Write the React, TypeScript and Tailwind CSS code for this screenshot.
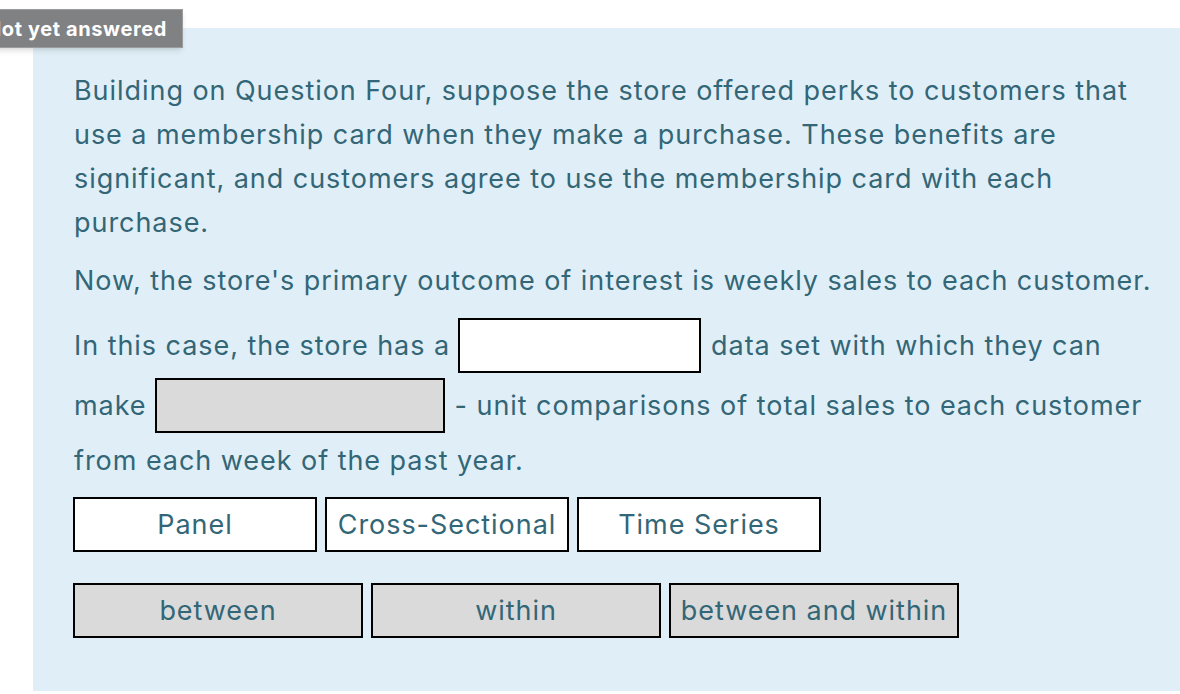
const font = { fontFamily: "Inter, 'Open Sans', sans-serif" };

function Blank({ filled }: { filled?: boolean }) {
  return (
    <span
      className={
        "inline-block h-[55px] border-2 border-black " +
        (filled ? "w-[290px] bg-[#dadada]" : "w-[243px] bg-white")
      }
    />
  );
}

function Choice({ label, gray }: { label: string; gray?: boolean }) {
  return (
    <div
      className={
        "flex h-[55px] items-center justify-center border-2 border-black whitespace-nowrap " +
        (gray ? "w-[290px] bg-[#dadada]" : "w-[244px] bg-white")
      }
    >
      {label}
    </div>
  );
}

export default function App() {
  return (
    <div className="relative h-[694px] w-[1180px] overflow-hidden bg-white" style={font}>
      <div className="absolute top-[9px] left-[-30px] z-10 flex h-[39px] items-center border border-[#9c9c9c] bg-[#7f8183] px-[15px] text-[20px] font-bold tracking-[0.6px] text-white shadow-md">
        Not yet answered
      </div>

      <div className="ml-[33px] mt-[28px] h-[663px] bg-[#e0eff7] pl-[41px] pt-[41px] text-[27px] leading-[44px] tracking-[0.95px] text-[#336676]">
        <p className="whitespace-nowrap">
          Building on Question Four, suppose the store offered perks to customers that
          <br />
          use a membership card when they make a purchase. These benefits are
          <br />
          significant, and customers agree to use the membership card with each
          <br />
          purchase.
        </p>
        <p className="mt-[14px] whitespace-nowrap">
          Now, the store's primary outcome of interest is weekly sales to each customer.
        </p>

        <div className="mt-[15px] flex items-center whitespace-nowrap">
          <span>In this case, the store has a</span>
          <span className="ml-[8px] flex">
            <Blank />
          </span>
          <span className="ml-[10px]">data set with which they can</span>
        </div>
        <div className="mt-[5px] flex items-center whitespace-nowrap">
          <span>make</span>
          <span className="ml-[8px] flex">
            <Blank filled />
          </span>
          <span className="ml-[10px]">- unit comparisons of total sales to each customer</span>
        </div>
        <div className="mt-[6px] whitespace-nowrap">from each week of the past year.</div>

        <div className="mt-[14px] flex gap-[8px] -ml-[1px]">
          <Choice label="Panel" />
          <Choice label="Cross-Sectional" />
          <Choice label="Time Series" />
        </div>
        <div className="mt-[31px] flex gap-[8px] -ml-[1px]">
          <Choice label="between" gray />
          <Choice label="within" gray />
          <Choice label="between and within" gray />
        </div>
      </div>
    </div>
  );
}
